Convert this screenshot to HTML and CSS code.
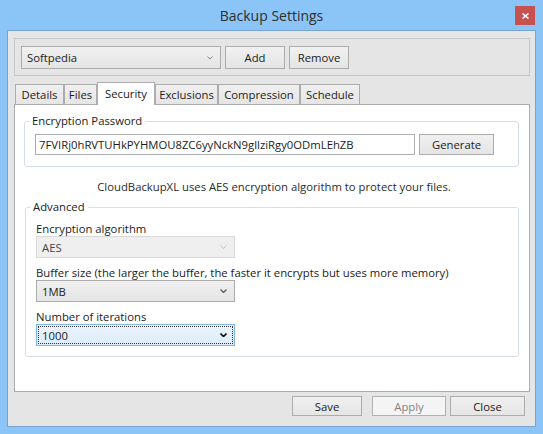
FILE: index.html
```html
<!DOCTYPE html>
<html>
<head>
<meta charset="utf-8">
<link rel="stylesheet" href="styles.css">
</head>
<body>
<div class="window">
  <div class="titlebar">
    <span></span>
    <span class="title">Backup Settings</span>
    <span class="close"><svg width="7" height="6" viewBox="0 0 7 6"><path d="M0.5 0.5 L6.5 5.5 M6.5 0.5 L0.5 5.5" stroke="#fff" stroke-width="1.6" fill="none"/></svg></span>
  </div>
  <div class="client">
    <div class="profile-box">
      <div class="combo profile"><span>Softpedia</span><svg class="chev" width="6" height="4" viewBox="0 0 6 4"><path d="M0.5 0.5 L3 3 L5.5 0.5" stroke="#8a8a8a" stroke-width="1" fill="none"/></svg></div>
      <div class="btn w60">Add</div>
      <div class="btn w60">Remove</div>
    </div>
    <div class="tabs">
      <div class="tab t-details">Details</div>
      <div class="tab t-files">Files</div>
      <div class="tab active t-security">Security</div>
      <div class="tab t-excl">Exclusions</div>
      <div class="tab t-comp">Compression</div>
      <div class="tab t-sched">Schedule</div>
    </div>
    <div class="panel">
      <fieldset class="group pw">
        <legend>Encryption Password</legend>
        <div class="pw-row">
          <div class="textbox">7FVIRj0hRVTUHkPYHMOU8ZC6yyNckN9gllziRgy0ODmLEhZB</div>
          <div class="btn gen">Generate</div>
        </div>
      </fieldset>
      <p class="info">CloudBackupXL uses AES encryption algorithm to protect your files.</p>
      <fieldset class="group adv">
        <legend>Advanced</legend>
        <div class="label">Encryption algorithm</div>
        <div class="combo field disabled"><span>AES</span><svg class="chev" width="7" height="4" viewBox="0 0 7 4"><path d="M0.5 0.5 L3.5 3.5 L6.5 0.5" stroke="#c4c4c4" stroke-width="1" fill="none"/></svg></div>
        <div class="label">Buffer size (the larger the buffer, the faster it encrypts but uses more memory)</div>
        <div class="combo field"><span>1MB</span><svg class="chev" width="7" height="4" viewBox="0 0 7 4"><path d="M0.5 0.5 L3.5 3.5 L6.5 0.5" stroke="#555" stroke-width="1.2" fill="none"/></svg></div>
        <div class="label">Number of iterations</div>
        <div class="combo field focused"><div class="focus-rect"><span>1000</span><svg class="chev" width="7" height="4" viewBox="0 0 7 4"><path d="M0.5 0.5 L3.5 3.5 L6.5 0.5" stroke="#111" stroke-width="1.6" fill="none"/></svg></div></div>
      </fieldset>
    </div>
    <div class="footer">
      <div class="btn save">Save</div>
      <div class="btn apply disabled">Apply</div>
      <div class="btn close-btn">Close</div>
    </div>
  </div>
</div>
</body>
</html>
```
FILE: styles.css
```css
* { box-sizing: border-box; }
html, body { margin: 0; padding: 0; }
body {
  font-family: "Open Sans", "Segoe UI", sans-serif;
  font-size: 11.3px;
  color: #1b1b1b;
  width: 543px;
  height: 434px;
  overflow: hidden;
}
.window {
  width: 543px;
  height: 434px;
  background: #8bc5f7;
  padding: 0 7px 7px 7px;
  display: flex;
  flex-direction: column;
}
.titlebar {
  height: 30px;
  flex: none;
  display: grid;
  grid-template-columns: 1fr auto 1fr;
  align-items: start;
}
.title {
  font-size: 14px;
  line-height: 31px;
  color: #2e2e2e;
}
.close {
  justify-self: end;
  margin-top: 6px;
  margin-right: 1px;
  width: 20px;
  height: 19px;
  background: #c75050;
  display: flex;
  align-items: center;
  justify-content: center;
}
.client {
  flex: 1;
  border: 1px solid #77a4d2;
  background: #e5e5e5;
  padding: 7px 5px 0 6px;
  display: flex;
  flex-direction: column;
}
.profile-box {
  border: 1px solid #c6c6c6;
  padding: 7px 6px 6px 6px;
  display: flex;
  gap: 4px;
}
.combo {
  display: flex;
  align-items: center;
  justify-content: space-between;
  border: 1px solid #acacac;
  background: linear-gradient(#f0f0f0, #e5e5e5);
  padding: 0 7px 0 5px;
}
.profile { width: 200px; height: 23px; padding-left: 5px; padding-right: 7px; }
.btn {
  height: 23px;
  border: 1px solid #acacac;
  background: linear-gradient(#f0f0f0, #e5e5e5);
  display: flex;
  align-items: center;
  justify-content: center;
}
.w60 { width: 60px; }
.tabs {
  margin-top: 6px;
  padding-left: 1px;
  display: flex;
  align-items: flex-end;
  height: 22px;
  position: relative;
  z-index: 1;
}
.tab {
  height: 20px;
  border: 1px solid #acacac;
  border-bottom: none;
  background: linear-gradient(#f0f0f0, #e5e5e5);
  line-height: 19px;
  text-align: center;
  white-space: nowrap;
}
.tab.active {
  height: 23px;
  margin-bottom: -1px;
  background: #fff;
  line-height: 21px;
}
.t-details { width: 49px; }
.t-files { width: 33px; }
.t-security { width: 58px; }
.t-excl { width: 63px; }
.t-comp { width: 82px; }
.t-sched { width: 60px; }
.panel {
  height: 288px;
  flex: none;
  border: 1px solid #acacac;
  background: #fff;
  padding-top: 8px;
}
.group {
  border: 1px solid #d5dfe5;
  border-radius: 3px;
  min-width: 0;
}
.group legend {
  padding: 0 3px;
  margin-left: -6px;
  line-height: 16px;
}
.pw {
  margin: 0 10px 0 9px;
  padding: 5px 10px 11px 10px;
}
.pw-row { display: flex; gap: 4px; }
.textbox {
  width: 380px;
  height: 21px;
  border: 1px solid #abadb3;
  padding: 0 3px;
  line-height: 19px;
  color: #1b1b1b;
  white-space: nowrap;
}
.gen { width: 75px; height: 21px; }
.info {
  margin: 12px 0 4px;
  text-align: center;
  line-height: 16px;
  color: #2b2b2b;
  padding-left: 4px;
}
.adv {
  margin: 0 10px 0 10px;
  padding: 6px 10px 10px 10px;
}
.label { line-height: 15px; margin-top: 7px; white-space: nowrap; }
.label:first-of-type { margin-top: 0; }
.field { width: 199px; height: 22px; }
.field.disabled {
  background: #efefef;
  border-color: #d9d9d9;
  color: #444;
}
.field.focused {
  border-color: #7eb4ea;
  background: linear-gradient(#ecf4fc, #dcecfc);
  padding: 1px;
}
.focus-rect {
  flex: 1;
  height: 100%;
  border: 1px dotted #333;
  display: flex;
  align-items: center;
  justify-content: space-between;
  padding: 0 5px 0 3px;
}
.footer {
  margin-top: 4px;
  display: flex;
  justify-content: flex-end;
  padding-right: 5px;
}
.footer .btn { height: 20px; }
.save { width: 70px; margin-right: 10px; }
.apply { width: 74px; margin-right: 4px; }
.close-btn { width: 75px; }
.btn.disabled {
  background: #f4f4f4;
  border-color: #adb2b5;
  color: #838383;
}
```
